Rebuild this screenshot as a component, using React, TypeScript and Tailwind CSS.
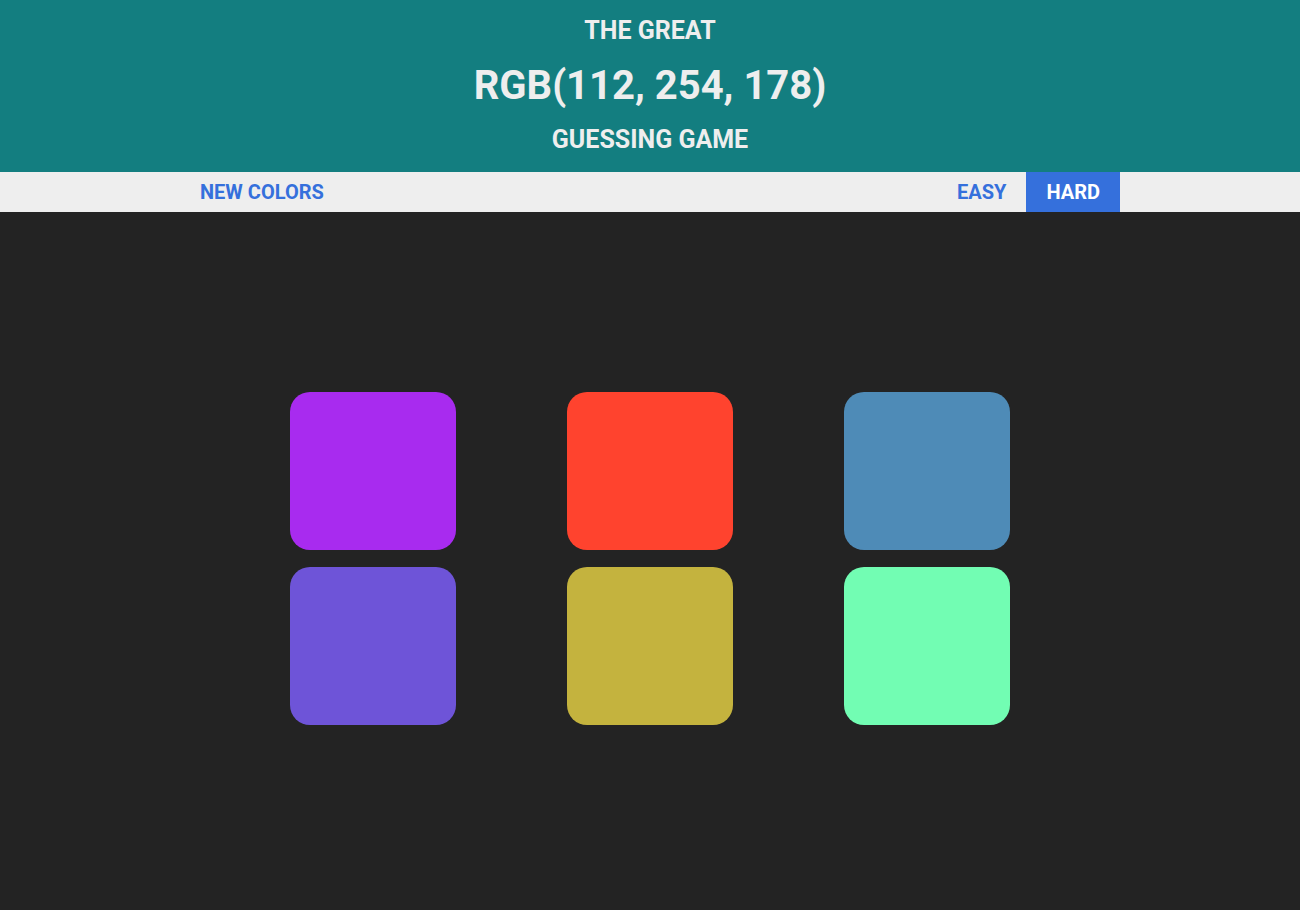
import React from "react";

const colors = ["#a82bef", "#ff432e", "#4e8bb7", "#6e54d8", "#c4b33e", "#72fdb3"];

export default function App() {
  return (
    <div className="min-h-[910px] bg-[#232323]" style={{ fontFamily: "Roboto, 'Liberation Sans', sans-serif" }}>
      <header className="h-[172px] bg-[#137e80] text-[#eeeeee] font-bold text-center uppercase pt-[10px]">
        <div className="h-[42px] leading-[42px] text-[25px]">The Great</div>
        <div className="h-[67px] leading-[67px] text-[40px]">RGB(112, 254, 178)</div>
        <div className="h-[42px] leading-[42px] text-[25px]">Guessing Game</div>
      </header>
      <nav className="h-[40px] bg-[#eeeeee]">
        <div className="mx-auto flex h-full w-[940px] items-stretch text-[20px] font-bold">
          <button className="px-[20px] uppercase text-[#3570dc]">New Colors</button>
          <div className="flex-1" />
          <button className="px-[20px] uppercase text-[#3570dc]">Easy</button>
          <button className="bg-[#3570dc] px-[20px] uppercase text-white">Hard</button>
        </div>
      </nav>
      <main className="mx-auto mt-[180px] grid w-[720px] grid-cols-3 gap-x-[111px] gap-y-[17px]">
        {colors.map((c) => (
          <div key={c} className="h-[158px] w-[166px] rounded-[20px]" style={{ backgroundColor: c }} />
        ))}
      </main>
    </div>
  );
}
